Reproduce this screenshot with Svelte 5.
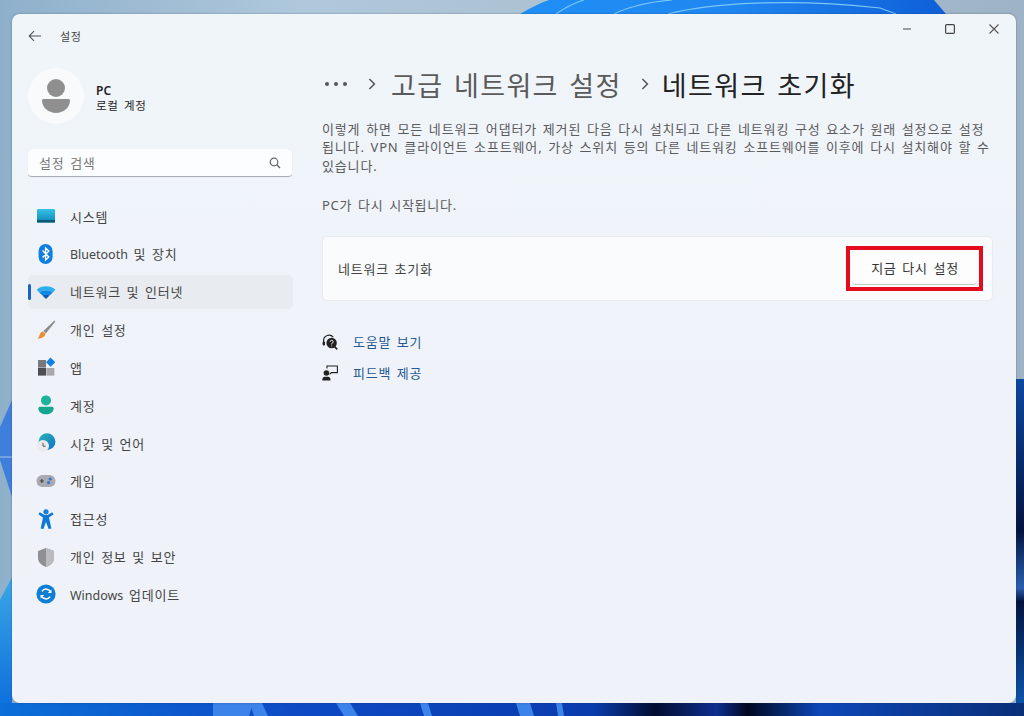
<script>
	const navItems = [
		{ id: 'system', label: '시스템' },
		{ id: 'bluetooth', latin: 'Bluetooth', label: ' 및 장치' },
		{ id: 'network', label: '네트워크 및 인터넷', active: true },
		{ id: 'personal', label: '개인 설정' },
		{ id: 'apps', label: '앱' },
		{ id: 'account', label: '계정' },
		{ id: 'time', label: '시간 및 언어' },
		{ id: 'game', label: '게임' },
		{ id: 'access', label: '접근성' },
		{ id: 'privacy', label: '개인 정보 및 보안' },
		{ id: 'update', latin: 'Windows', label: ' 업데이트' }
	];
</script>

{#snippet navIcon(id)}
	<svg class="nav-icon" viewBox="0 0 20 20" width="20" height="20" aria-hidden="true">
		{#if id === 'system'}
			<rect x="1" y="3" width="18" height="13.5" rx="1" fill="url(#sys)" />
			<rect x="1" y="14" width="18" height="2.5" fill="#0d5a78" />
		{:else if id === 'bluetooth'}
			<rect x="2.6" y="0" width="14" height="20" rx="7" fill="#0f7fe0" />
			<path d="M6.6 6.6l6.2 6.4-3.2 3V4l3.2 3-6.2 6.4" fill="none" stroke="#fff" stroke-width="1.4" />
		{:else if id === 'network'}
			<path d="M0.6 7.6C5.6 3 14.4 3 19.4 7.6L16.8 10.4C12.8 7.4 7.2 7.4 3.2 10.4z" fill="#29aef0" />
			<path d="M3.2 10.4C7.2 7.4 12.8 7.4 16.8 10.4L13.6 13.6C11.4 12.4 8.6 12.4 6.4 13.6z" fill="#0f86e0" />
			<path d="M6.4 13.6C8.6 12.4 11.4 12.4 13.6 13.6L10 17z" fill="#0a5cb8" />
		{:else if id === 'personal'}
			<path d="M18.4 0.6l1 1L9.8 13.4 7.4 11z" fill="#8d8d8d" />
			<path d="M7 11.4l2.4 2.4c-.4 3-3.6 5-7.8 4.8 1.8-1.4 1.6-3 2.4-4.8.6-1.3 1.8-2.2 3-2.4z" fill="#ef8a33" />
		{:else if id === 'apps'}
			<rect x="2" y="3" width="8" height="7.6" fill="#77787b" />
			<rect x="2" y="11" width="8" height="7.6" fill="#4d4e51" />
			<rect x="10.4" y="11" width="8" height="7.6" fill="#a7a8aa" />
			<path d="M14.6 0.6l4.6 4.6-4.6 4.6-4.6-4.6z" fill="#0f7fe0" />
		{:else if id === 'account'}
			<circle cx="10" cy="5.4" r="5" fill="#1cb39a" />
			<path d="M2.4 13.4c0-1 .8-1.6 1.8-1.6h11.6c1 0 1.8.6 1.8 1.6 0 3.6-3.6 5.8-7.6 5.8s-7.6-2.2-7.6-5.8z" fill="#17a58e" />
		{:else if id === 'time'}
			<circle cx="11" cy="8.6" r="8.4" fill="url(#globe)" />
			<circle cx="7" cy="13" r="6" fill="#e9eaec" />
			<path d="M7 9.8V13.2H9.6" fill="none" stroke="#555" stroke-width="1" />
		{:else if id === 'game'}
			<rect x="0.6" y="4" width="18.8" height="12" rx="5.6" fill="#a9abb0" />
			<path d="M3.8 10h4M5.8 8v4" stroke="#444" stroke-width="1.2" />
			<circle cx="14.2" cy="8" r="1.6" fill="#2a78cf" />
			<circle cx="12.6" cy="11.6" r="1.6" fill="#2a78cf" />
		{:else if id === 'access'}
			<circle cx="10" cy="2.8" r="2.6" fill="#0f7fe0" />
			<path d="M2.4 5.2L7 8.4l-2.4 11 2.8.6L10 13l2.6 7 2.8-.6L13 8.4l4.6-3.2-1.4-2L11.6 6H8.4L3.8 3.2z" fill="#0f78d4" />
		{:else if id === 'privacy'}
			<path d="M10 1L18 4v7c0 4.4-3.4 7.4-8 9-4.6-1.6-8-4.6-8-9V4z" fill="#8e9094" />
			<path d="M10 1L18 4v7c0 4.4-3.4 7.4-8 9z" fill="#b9bbbe" />
		{:else if id === 'update'}
			<circle cx="10" cy="10" r="9.6" fill="#0f7fd6" />
			<path d="M14.8 8.4A5 5 0 0 0 5.9 7.4M5.2 11.6A5 5 0 0 0 14.1 12.6" fill="none" stroke="#fff" stroke-width="1.5" />
			<path d="M15.4 5.4v3.6h-3.6zM4.6 14.6V11h3.6z" fill="#fff" />
		{/if}
	</svg>
{/snippet}

<div class="desktop">
	<svg class="wallpaper" viewBox="0 0 1024 716" preserveAspectRatio="none" aria-hidden="true">
		<defs>
			<linearGradient id="sky" x1="0" y1="0" x2="1" y2="0">
				<stop offset="0" stop-color="#8fb0cb" />
				<stop offset="0.3" stop-color="#afc8dc" />
				<stop offset="0.5" stop-color="#adc3d4" />
				<stop offset="1" stop-color="#9fb3c6" />
			</linearGradient>
			<linearGradient id="deep" x1="0" y1="0" x2="1" y2="0">
				<stop offset="0" stop-color="#0b6fd8" />
				<stop offset="0.3" stop-color="#0d49c4" />
				<stop offset="0.58" stop-color="#0a3cad" />
				<stop offset="0.64" stop-color="#020d30" />
				<stop offset="0.7" stop-color="#0d2f90" />
				<stop offset="0.73" stop-color="#01081f" />
				<stop offset="0.8" stop-color="#0d47b8" />
				<stop offset="1" stop-color="#0a2f78" />
			</linearGradient>
			<linearGradient id="swirl" x1="0" y1="0" x2="1" y2="0">
				<stop offset="0" stop-color="#1f8ff5" />
				<stop offset="0.5" stop-color="#1f86f0" />
				<stop offset="1" stop-color="#0f5fd8" />
			</linearGradient>
			<linearGradient id="right" x1="0" y1="0" x2="0" y2="1">
				<stop offset="0" stop-color="#0d47a1" />
				<stop offset="0.45" stop-color="#04143f" />
				<stop offset="0.62" stop-color="#2a5fb0" />
				<stop offset="0.66" stop-color="#04143f" />
				<stop offset="1" stop-color="#0d5bb8" />
			</linearGradient>
			<linearGradient id="lower" x1="0" y1="0" x2="0" y2="1">
				<stop offset="0" stop-color="#3aa6e6" />
				<stop offset="1" stop-color="#0a6cdc" />
			</linearGradient>
			<linearGradient id="sys" x1="0" y1="0" x2="0" y2="1">
				<stop offset="0" stop-color="#35c1e6" />
				<stop offset="1" stop-color="#0f86b8" />
			</linearGradient>
			<linearGradient id="globe" x1="0" y1="0" x2="1" y2="1">
				<stop offset="0" stop-color="#2cb6b0" />
				<stop offset="1" stop-color="#0f6fd0" />
			</linearGradient>
		</defs>
		<rect width="1024" height="716" fill="url(#sky)" />
		<path d="M520 14C530 8 540 3 549 0H934C938 5 942 9 946 14z" fill="url(#swirl)" />
		<path d="M556 14C566 7 574 3 584 0M614 14C630 6 650 2 672 0M668 14C710 3 790 -2 880 8L896 14" fill="none" stroke="#7cc6fa" stroke-width="1.2" />
		<path d="M0 427L12 400V497L0 460z" fill="#3f7fdc" />
		<path d="M0 457H12" stroke="#a9c6ea" stroke-width="1" />
		<path d="M0 600L12 577V716H0z" fill="url(#lower)" />
		<rect x="1016" y="379" width="8" height="337" fill="url(#right)" />
		<rect y="703" width="1024" height="13" fill="url(#deep)" />
		<path d="M213 703h40l-4 13h-36zM250 703h12l6 13h-14zM336 703h14l8 13h-14zM420 703h8l4 13h-8zM516 703h14l4 13h-14zM556 703h6l2 13h-6z" fill="#3c83ea" />
	</svg>

	<div class="window">
		<header class="titlebar">
			<div class="title-left">
				<svg viewBox="0 0 14 12" width="14" height="12" aria-hidden="true">
					<path d="M13 6H1.4M6 1.2L1.2 6 6 10.8" fill="none" stroke="#555" stroke-width="1.1" />
				</svg>
				<span class="app-name">설정</span>
			</div>
			<div class="controls">
				<svg viewBox="0 0 10 10" width="10" height="10" aria-hidden="true"><path d="M2 5h8" stroke="#555" stroke-width="1.1" /></svg>
				<svg viewBox="0 0 10 10" width="10" height="10" aria-hidden="true"><rect x="0.6" y="0.6" width="8.8" height="8.8" rx="1.2" fill="none" stroke="#444" stroke-width="1.2" /></svg>
				<svg viewBox="0 0 10 10" width="10" height="10" aria-hidden="true"><path d="M0.5 0.5l9 9M9.5 0.5l-9 9" stroke="#555" stroke-width="1.1" /></svg>
			</div>
		</header>

		<div class="body">
			<aside class="sidebar">
				<div class="profile">
					<div class="avatar">
						<svg viewBox="0 0 28 34" width="28" height="34" aria-hidden="true">
							<circle cx="14" cy="9" r="9" fill="#8f8f8f" />
							<path d="M0 21.5c0-.8.7-1.5 1.5-1.5h25c.8 0 1.5.7 1.5 1.5C28 29 21 34 14 34S0 29 0 21.5z" fill="#8f8f8f" />
						</svg>
					</div>
					<div class="who">
						<strong>PC</strong>
						<span>로컬 계정</span>
					</div>
				</div>

				<div class="search">
					<span>설정 검색</span>
					<svg viewBox="0 0 12 12" width="12" height="12" aria-hidden="true">
						<circle cx="5" cy="5" r="3.8" fill="none" stroke="#666" stroke-width="1.2" />
						<path d="M7.8 7.8L11 11" stroke="#666" stroke-width="1.3" />
					</svg>
				</div>

				<nav class="nav">
					{#each navItems as item}
						<div class="nav-item" class:active={item.active}>
							{@render navIcon(item.id)}
							<span>{#if item.latin}<span class="latin">{item.latin}</span>{/if}{item.label}</span>
						</div>
					{/each}
				</nav>
			</aside>

			<main class="main">
				<div class="crumbs">
					<span class="dots">
						<i></i><i></i><i></i>
					</span>
					<svg class="chev" viewBox="0 0 8 12" width="8" height="12" aria-hidden="true"><path d="M1.4 1l5 5-5 5" fill="none" stroke="#555" stroke-width="1.5" /></svg>
					<span class="crumb">고급 네트워크 설정</span>
					<svg class="chev second" viewBox="0 0 8 12" width="8" height="12" aria-hidden="true"><path d="M1.4 1l5 5-5 5" fill="none" stroke="#555" stroke-width="1.5" /></svg>
					<span class="crumb current">네트워크 초기화</span>
				</div>

				<p class="desc">이렇게 하면 모든 네트워크 어댑터가 제거된 다음 다시 설치되고 다른 네트워킹 구성 요소가 원래 설정으로 설정됩니다. VPN 클라이언트 소프트웨어, 가상 스위치 등의 다른 네트워킹 소프트웨어를 이후에 다시 설치해야 할 수 있습니다.</p>
				<p class="restart">PC가 다시 시작됩니다.</p>

				<section class="card">
					<span>네트워크 초기화</span>
					<div class="highlight">
						<button class="reset" type="button">지금 다시 설정</button>
					</div>
				</section>

				<div class="links">
					<a href="#help">
						<svg viewBox="0 0 16 16" width="16" height="16" aria-hidden="true">
							<path d="M1.6 9V6.6a5.4 5.4 0 0 1 9.6-3.4" fill="none" stroke="#222" stroke-width="1.2" />
							<rect x="0.6" y="7.4" width="2.4" height="4" rx="1" fill="#222" />
							<circle cx="9.6" cy="9" r="5.2" fill="#222" />
							<path d="M12.6 12.6l2.6 2.8" stroke="#222" stroke-width="1.6" />
							<path d="M8.2 7.8a1.5 1.5 0 1 1 2 1.4l-.6.6v.6M9.6 11.6v.8" fill="none" stroke="#eef3f9" stroke-width="1" />
						</svg>
						<span>도움말 보기</span>
					</a>
					<a href="#feedback">
						<svg viewBox="0 0 16 16" width="16" height="16" aria-hidden="true">
							<circle cx="4.4" cy="8" r="2.8" fill="#222" />
							<path d="M0.4 15.6v-1.4c0-1.4 1-2.4 2.4-2.4h3.2c1.4 0 2.4 1 2.4 2.4v1.4z" fill="#222" />
							<path d="M5 3.6V1h10.4v6.6h-6l-1.8 1.8" fill="none" stroke="#222" stroke-width="1.1" />
						</svg>
						<span>피드백 제공</span>
					</a>
				</div>
			</main>
		</div>
	</div>
</div>

<style>
	:global(body) {
		margin: 0;
		font-family: 'Noto Sans', 'Noto Sans CJK KR', sans-serif;
		color: #333;
		letter-spacing: 0.75px;
		word-spacing: 1.6px;
	}

	.latin {
		letter-spacing: 0;
		font-size: 0.96em;
	}

	.desktop {
		position: relative;
		box-sizing: border-box;
		width: 1024px;
		height: 716px;
		padding: 14px 8px 13px 12px;
		overflow: hidden;
	}

	.wallpaper {
		position: absolute;
		left: 0;
		top: 0;
		width: 1024px;
		height: 716px;
	}

	.window {
		position: relative;
		display: flex;
		flex-direction: column;
		height: 100%;
		border-radius: 8px;
		background: linear-gradient(180deg, #f0f5fa 0%, #eff3f9 60%, #eff2f8 100%);
		box-shadow: 0 0 2px rgba(40, 50, 70, 0.5);
	}

	.titlebar {
		display: flex;
		justify-content: space-between;
		align-items: center;
		height: 44px;
		flex: none;
	}

	.title-left {
		display: flex;
		align-items: center;
		gap: 18px;
		padding-left: 16px;
	}

	.app-name {
		font-size: 11px;
		color: #444;
	}

	.controls {
		display: flex;
		align-items: center;
		gap: 34px;
		padding-right: 17px;
		margin-top: -14px;
	}

	.body {
		display: flex;
		flex: 1;
		min-height: 0;
	}

	.sidebar {
		flex: none;
		box-sizing: border-box;
		width: 310px;
		padding: 10px 0 0 16px;
	}

	.profile {
		display: flex;
		align-items: center;
		gap: 12px;
	}

	.avatar {
		display: flex;
		align-items: center;
		justify-content: center;
		width: 56px;
		height: 56px;
		border-radius: 50%;
		background: #f8fafb;
	}

	.who {
		display: flex;
		flex-direction: column;
		margin-top: 4px;
		font-size: 11.5px;
		line-height: 15px;
		color: #222;
	}

	.who strong {
		font-weight: 600;
		font-size: 12px;
		letter-spacing: 0;
	}

	.search {
		display: flex;
		align-items: center;
		justify-content: space-between;
		box-sizing: border-box;
		width: 264px;
		height: 28px;
		margin-top: 25px;
		padding: 0 11px;
		border-radius: 4px;
		background: #fcfdfe;
		border-bottom: 1px solid #a9adb3;
		box-shadow: 0 0 1px rgba(0, 0, 0, 0.12);
		font-size: 13px;
		color: #777;
	}

	.nav {
		display: flex;
		flex-direction: column;
		gap: 3.85px;
		width: 265px;
		margin-top: 22px;
	}

	.nav-item {
		position: relative;
		display: flex;
		align-items: center;
		gap: 14px;
		height: 34px;
		padding-left: 8px;
		border-radius: 5px;
		font-size: 13px;
		color: #454545;
	}

	.nav-item.active {
		background: #e8ebef;
	}

	.nav-item.active::before {
		content: '';
		position: absolute;
		left: 0;
		top: 9px;
		width: 3px;
		height: 16px;
		border-radius: 2px;
		background: #1a62c4;
	}

	.nav-icon {
		flex: none;
	}

	.main {
		flex: 1;
		min-width: 0;
		padding-right: 23px;
	}

	.crumbs {
		display: flex;
		align-items: center;
		height: 40px;
		margin-top: 6px;
		font-size: 27px;
		letter-spacing: 1.4px;
		word-spacing: 2px;
		color: #5a5a5a;
	}

	.dots {
		display: flex;
		gap: 5px;
		margin-left: 3px;
	}

	.dots i {
		width: 4px;
		height: 4px;
		border-radius: 50%;
		background: #555;
	}

	.chev {
		margin: 0 15px 0 21px;
	}

	.chev.second {
		margin: 0 13px 0 19px;
	}

	.crumb.current {
		color: #222;
	}

	.desc,
	.restart {
		margin: 0;
		font-size: 13px;
		line-height: 18.4px;
		color: #5a5a5a;
	}

	.desc {
		margin-top: 16px;
		letter-spacing: 0.85px;
		word-spacing: 1.5px;
	}

	.restart {
		margin-top: 21px;
	}

	.card {
		display: flex;
		align-items: center;
		justify-content: space-between;
		box-sizing: border-box;
		height: 65px;
		margin-top: 21px;
		padding: 0 9px 0 15px;
		border-radius: 5px;
		background: #f9fbfc;
		border: 1px solid #e8ebef;
		font-size: 13px;
		color: #444;
	}

	.highlight {
		padding: 2px;
		border: 4px solid #e30b1c;
	}

	.reset {
		display: block;
		width: 125px;
		height: 33px;
		padding: 0 0 0 1px;
		border: none;
		border-bottom: 1px solid #c4c6ca;
		border-radius: 4px;
		background: #fdfdfd;
		font: inherit;
		letter-spacing: inherit;
		word-spacing: inherit;
		color: #333;
	}

	.links {
		display: flex;
		flex-direction: column;
		gap: 11px;
		margin-top: 31px;
	}

	.links a {
		display: flex;
		align-items: center;
		gap: 15px;
		height: 20px;
		font-size: 13px;
		color: #255a94;
		text-decoration: none;
	}
</style>
